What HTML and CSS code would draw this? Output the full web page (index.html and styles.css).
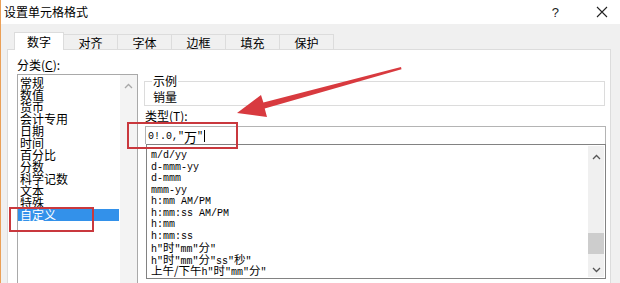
FILE: index.html
```html
<!DOCTYPE html>
<html lang="zh-CN">
<head>
<meta charset="utf-8">
<title>设置单元格格式</title>
<link rel="stylesheet" href="styles.css">
</head>
<body>
<div class="window">
  <div class="titlebar">
    <span class="title">设置单元格格式</span>
    <span class="help">?</span>
    <svg class="close" width="12" height="12" viewBox="0 0 12 12"><path d="M1 1 L11 11 M11 1 L1 11" stroke="#222" stroke-width="1.1" fill="none"/></svg>
  </div>
  <div class="tabs">
    <div class="tab active">数字</div>
    <div class="tab">对齐</div>
    <div class="tab">字体</div>
    <div class="tab">边框</div>
    <div class="tab">填充</div>
    <div class="tab">保护</div>
  </div>
  <div class="panel">
    <div class="leftcol">
      <div class="label">分类(<u>C</u>):</div>
      <div class="catlist">
        <ul class="items">
          <li>常规</li>
          <li>数值</li>
          <li>货币</li>
          <li>会计专用</li>
          <li>日期</li>
          <li>时间</li>
          <li>百分比</li>
          <li>分数</li>
          <li>科学记数</li>
          <li>文本</li>
          <li>特殊</li>
          <li class="sel">自定义</li>
        </ul>
        <div class="vscroll">
          <svg class="chev" width="9" height="6" viewBox="0 0 9 6"><path d="M1 5 L4.5 1.5 L8 5" stroke="#a8a8a8" stroke-width="1.3" fill="none"/></svg>
        </div>
      </div>
    </div>
    <div class="rightcol">
      <fieldset class="sample">
        <legend>示例</legend>
        <div class="sampletext">销量</div>
      </fieldset>
      <div class="label typelabel">类型(<u>T</u>):</div>
      <div class="input"><span class="mono">0!.0,"</span><span class="cj">万</span><span class="mono">"</span><span class="caret"></span></div>
      <div class="fmtlist">
        <ul class="fmts">
          <li>m/d/yy</li>
          <li>d-mmm-yy</li>
          <li>d-mmm</li>
          <li>mmm-yy</li>
          <li>h:mm AM/PM</li>
          <li>h:mm:ss AM/PM</li>
          <li>h:mm</li>
          <li>h:mm:ss</li>
          <li>h"<span class="cj">时</span>"mm"<span class="cj">分</span>"</li>
          <li>h"<span class="cj">时</span>"mm"<span class="cj">分</span>"ss"<span class="cj">秒</span>"</li>
          <li><span class="cj">上午/下午</span>h"<span class="cj">时</span>"mm"<span class="cj">分</span>"</li>
        </ul>
        <div class="vscroll2">
          <svg class="chev" width="9" height="6" viewBox="0 0 9 6"><path d="M1 5 L4.5 1.5 L8 5" stroke="#555" stroke-width="1.3" fill="none"/></svg>
          <div class="track"><div class="thumb"></div></div>
          <svg class="chev" width="9" height="6" viewBox="0 0 9 6"><path d="M1 1 L4.5 4.5 L8 1" stroke="#555" stroke-width="1.3" fill="none"/></svg>
        </div>
      </div>
    </div>
  </div>

  <div class="mark mark-input"></div>
  <div class="mark mark-cat"></div>
  <svg class="arrow" width="620" height="283" viewBox="0 0 620 283">
    <polygon points="236,113 260,95 262.4,102.6 400,67 400.5,69.2 263.7,108.5 266,117" fill="#d83a3f"/>
  </svg>
</div>
</body>
</html>
```

FILE: styles.css
```css
* { box-sizing: border-box; }
html, body { margin: 0; padding: 0; }
body {
  width: 620px;
  height: 283px;
  overflow: hidden;
  background: #f0f0f0;
  font-family: "Noto Sans CJK SC", "Noto Sans", sans-serif;
  font-size: 12px;
  color: #000;
}
.window {
  position: relative;
  width: 620px;
  height: 283px;
  border-left: 1px solid #eba057;
  overflow: hidden;
}
.titlebar {
  height: 24px;
  background: #fff;
  display: flex;
  align-items: center;
  padding-left: 3px;
}
.title { font-size: 12px; line-height: 24px; }
.help { margin-left: auto; font-family: "Liberation Sans", sans-serif; font-size: 13px; margin-right: 37px; color: #222; }
.close { margin-right: 12px; }

.tabs {
  display: flex;
  align-items: flex-end;
  height: 25px;
  padding-left: 13px;
  padding-top: 8px;
}
.tab {
  width: 54px;
  height: 15px;
  border: 1px solid #dcdcdc;
  border-bottom: none;
  border-left: none;
  background: #f0f0f0;
  text-align: center;
  font-size: 12px;
  line-height: 15px;
}
.tab.active {
  width: 50px;
  height: 18px;
  background: #fff;
  border-left: 1px solid #dcdcdc;
  line-height: 18px;
  position: relative;
  z-index: 1;
  margin-bottom: -1px;
}
.panel {
  margin-left: 6px;
  margin-right: 9px;
  height: 260px;
  background: #fff;
  border: 1px solid #dcdcdc;
  display: grid;
  grid-template-columns: 121px 1fr;
  column-gap: 6px;
  padding: 7px 4px 0 9px;
  align-items: start;
}
.label { line-height: 16px; height: 16px; font-size: 12px; }
.catlist {
  margin-top: 1px;
  height: 230px;
  border: 1px solid #a9a9a9;
  display: flex;
}
.items {
  list-style: none;
  margin: 0;
  padding: 2px 0 0 0;
  flex: 1;
  font-size: 12px;
  line-height: 12px;
}
.items li { padding-left: 2px; height: 12px; white-space: nowrap; }
.items li.sel { background: #3391ea; color: #fff; margin-right: 1px; }
.vscroll {
  width: 17px;
  background: #f3f3f3;
  display: flex;
  justify-content: center;
  padding-top: 8px;
}
.rightcol { padding-top: 18px; }
.sample {
  margin: 0;
  padding: 3px 6px 2px 8px;
  border: 1px solid #dcdcdc;
  width: 461px;
  min-width: 0;
}
.sample legend {
  padding: 0 1px;
  margin-left: -1px;
  font-size: 12px;
  line-height: 12px;
}
.sampletext { line-height: 13px; font-size: 12px; }
.typelabel { margin-top: 2px; margin-left: 1px; }
.input {
  margin-top: 2px;
  margin-left: 1px;
  height: 18px;
  border: 1px solid #b4b4b4;
  border-bottom: none;
  display: flex;
  align-items: center;
  padding-left: 2px;
  padding-top: 1px;
}
.mono { font-family: "Liberation Mono", monospace; font-size: 10px; }
.cj { font-family: "Noto Sans CJK SC", sans-serif; font-size: 12px; }
.input .cj { font-size: 13px; }
.caret { display: inline-block; width: 1px; height: 12px; background: #000; margin-left: 1px; }
.fmtlist {
  margin-left: 2px;
  height: 135px;
  border: 1px solid #828282;
  display: flex;
}
.fmts {
  list-style: none;
  margin: 0;
  padding: 5px 0 0 4px;
  flex: 1;
  font-family: "Liberation Mono", monospace;
  font-size: 10px;
  color: #000;
}
.fmts li { height: 11.5px; line-height: 11.5px; white-space: nowrap; }
.fmts .cj { font-size: 11.5px; line-height: 10px; }
.vscroll2 {
  width: 16px;
  margin: 1px 1px 1px 0;
  background: #f0f0f0;
  display: flex;
  flex-direction: column;
  align-items: center;
  padding: 8px 0 4px;
}
.track { flex: 1; width: 16px; display: flex; flex-direction: column; justify-content: flex-end; padding-bottom: 13px; }
.thumb { height: 21px; background: #cdcdcd; }

.mark {
  position: absolute;
  border: 2px solid #c9383d;
}
.mark-input { left: 126px; top: 122px; width: 111px; height: 27px; }
.mark-cat { left: 8px; top: 207px; width: 85px; height: 25px; }
.arrow { position: absolute; left: 0; top: 0; pointer-events: none; }
```
